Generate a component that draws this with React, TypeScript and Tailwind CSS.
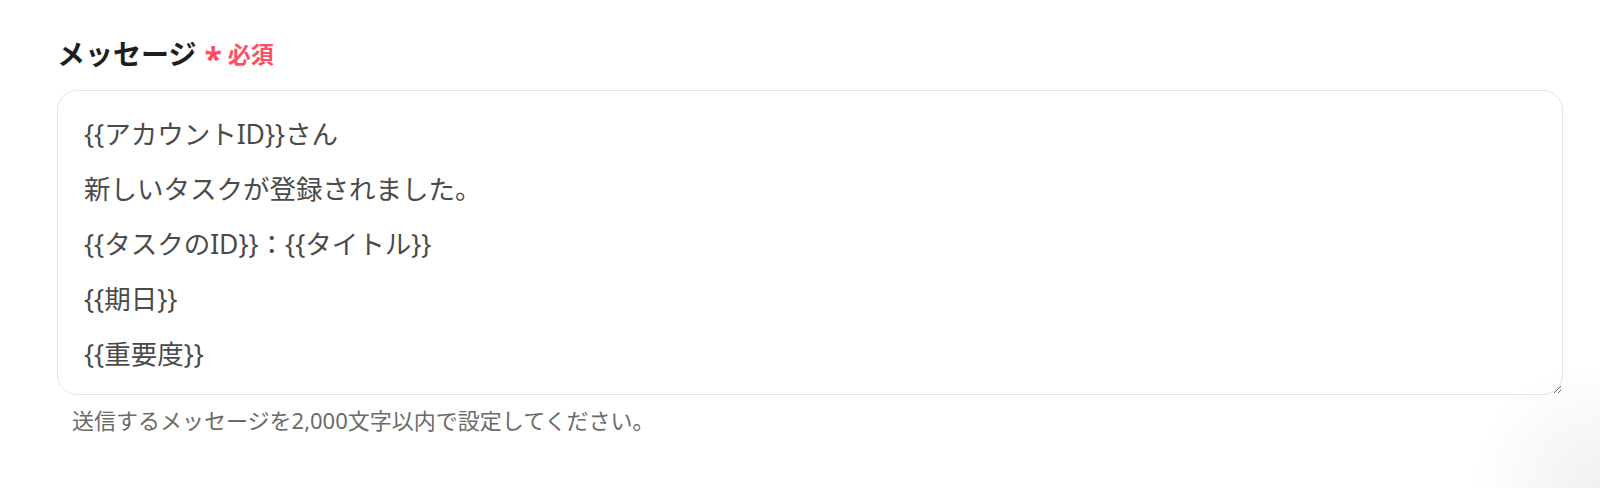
const FONT = "font-['Noto_Sans','Noto_Sans_CJK_JP',sans-serif]";

const message = `{{アカウントID}}さん
新しいタスクが登録されました。
{{タスクのID}}：{{タイトル}}
{{期日}}
{{重要度}}`;

export default function App() {
  return (
    <div className={`relative w-[1600px] h-[488px] overflow-hidden bg-white ${FONT}`}>
      <div className="pl-[57px] pr-[37px] pt-[34px]">
        <label className="flex items-center h-[40px]">
          <span className="text-[28px] font-bold text-[#1e1e1e] leading-none">メッセージ</span>
          <span className="ml-[8px] mt-[10px] text-[32px] font-bold text-[#ff4d63] leading-none">*</span>
          <span className="ml-[6px] text-[23px] font-bold text-[#ff4d63] leading-none">必須</span>
        </label>
        <textarea
          className="mt-[16px] block w-full h-[305px] resize-y rounded-[20px] border border-[#e1e4e8] bg-white pl-[26px] pr-[26px] pt-[16px] pb-[12px] text-[26.5px] leading-[55px] text-[#4a4a4a] outline-none"
          defaultValue={message}
        />
        <p className="mt-[12px] ml-[15px] text-[22px] leading-[26px] text-[#6a6a6a]">
          送信するメッセージを2,000文字以内で設定してください。
        </p>
      </div>
      <div className="pointer-events-none absolute right-0 bottom-0 w-[140px] h-[120px] bg-[radial-gradient(circle_at_100%_100%,rgba(0,0,0,0.06),rgba(0,0,0,0)_70%)]" />
    </div>
  );
}
